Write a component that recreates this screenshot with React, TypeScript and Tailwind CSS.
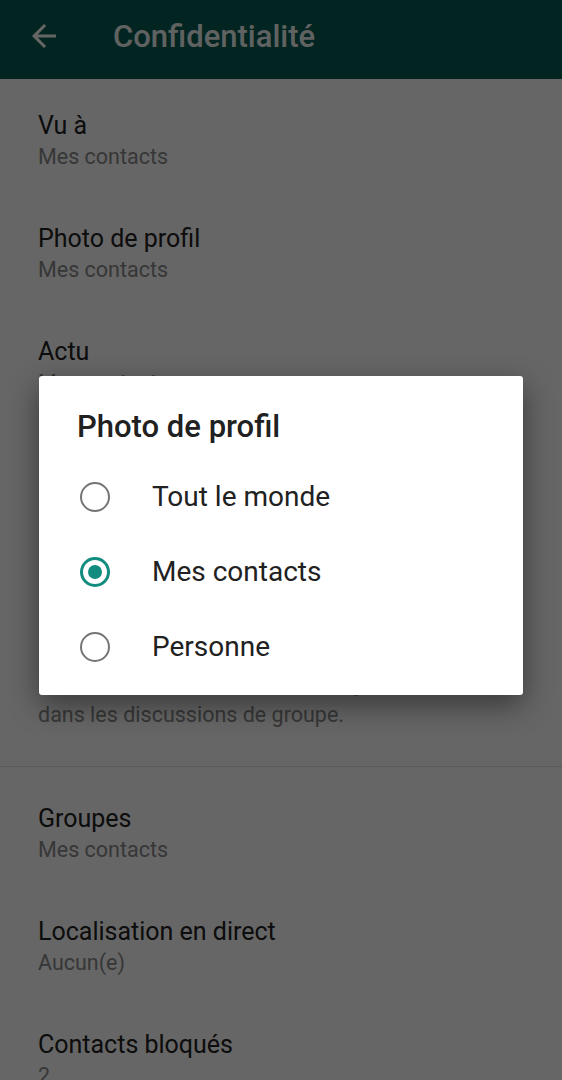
import { useState } from 'react';

const FONT = { fontFamily: 'Roboto, "Noto Sans", sans-serif' };

const TOP_ITEMS = [
  { title: 'Vu à', sub: 'Mes contacts' },
  { title: 'Photo de profil', sub: 'Mes contacts' },
  { title: 'Actu', sub: 'Mes contacts' },
  { title: 'Statut', sub: 'Mes contacts' },
];

const BOTTOM_ITEMS = [
  { title: 'Groupes', sub: 'Mes contacts' },
  { title: 'Localisation en direct', sub: 'Aucun(e)' },
  { title: 'Contacts bloqués', sub: '2' },
];

const OPTIONS = ['Tout le monde', 'Mes contacts', 'Personne'];

function Item({ title, sub }: { title: string; sub: string }) {
  return (
    <div className="px-[38px] py-[27px]">
      <div className="text-[25px] leading-[28px] text-[#212121]">{title}</div>
      <div className="mt-[3px] text-[21.5px] leading-[28px] text-[#8a8a8a]">{sub}</div>
    </div>
  );
}

function Radio({ checked }: { checked: boolean }) {
  return (
    <div
      className={`w-[30px] h-[30px] rounded-full flex items-center justify-center shrink-0 ${
        checked ? 'border-[3px] border-[#128C7E]' : 'border-[2.5px] border-[#757575]'
      }`}
    >
      {checked && <div className="w-[14px] h-[14px] rounded-full bg-[#128C7E]" />}
    </div>
  );
}

export default function App() {
  const [choice, setChoice] = useState('Mes contacts');

  return (
    <div className="relative w-[562px] h-[1080px] overflow-hidden bg-white" style={FONT}>
      {/* barre du haut */}
      <div className="h-[79px] bg-[#075E54] flex items-center pl-[26px]">
        <svg viewBox="0 0 24 24" className="w-[36px] h-[36px] -mt-[7px]" fill="#ffffff">
          <path d="M20 11H7.83l5.59-5.59L12 4l-8 8 8 8 1.41-1.41L7.83 13H20v-2z" />
        </svg>
        <div className="ml-[51px] -mt-[6px] text-[31px] leading-[36px] font-medium text-white/95">Confidentialité</div>
      </div>

      {/* liste */}
      <div className="pt-[6px]">
        {TOP_ITEMS.map((it) => (
          <Item key={it.title} {...it} />
        ))}
        <div className="flex pl-[38px] pr-[56px] pt-[27px] pb-[36px]">
          <div className="flex-1">
            <div className="text-[25px] leading-[28px] text-[#212121]">Confirmations de lecture</div>
            <div className="mt-[14px] text-[21.5px] leading-[31px] text-[#8a8a8a]">
              <div>Si vous désactivez les confirmations</div>
              <div>de lecture, vous ne pourrez pas voir</div>
              <div>celles des autres. Elles sont envoyées</div>
              <div>dans les discussions de groupe.</div>
            </div>
          </div>
          <div className="mt-[40px] w-[40px] h-[18px] rounded-full bg-[#8bcfc6] relative">
            <div className="absolute -top-[4px] right-0 w-[26px] h-[26px] rounded-full bg-[#128C7E] shadow" />
          </div>
        </div>
        <div className="h-px bg-[#e0e0e0]" />
        <div className="pt-[11px]">
          {BOTTOM_ITEMS.map((it) => (
            <Item key={it.title} {...it} />
          ))}
        </div>
      </div>

      {/* voile */}
      <div className="absolute inset-0 bg-black/60" />

      {/* dialogue */}
      <div className="absolute left-[39px] top-[376px] w-[484px] h-[319px] bg-white rounded-[3px] shadow-[0_10px_30px_rgba(0,0,0,0.45)] pt-[33px] pb-[11px]">
        <div className="pl-[38px] text-[31px] leading-[36px] font-medium text-[#212121]">Photo de profil</div>
        <div className="mt-[14px]">
          {OPTIONS.map((opt) => (
            <button
              key={opt}
              type="button"
              onClick={() => setChoice(opt)}
              className="w-full h-[75px] flex items-center pl-[41px] text-left"
            >
              <Radio checked={choice === opt} />
              <span className="ml-[42px] text-[28px] leading-[34px] text-[#212121]">{opt}</span>
            </button>
          ))}
        </div>
      </div>
    </div>
  );
}
